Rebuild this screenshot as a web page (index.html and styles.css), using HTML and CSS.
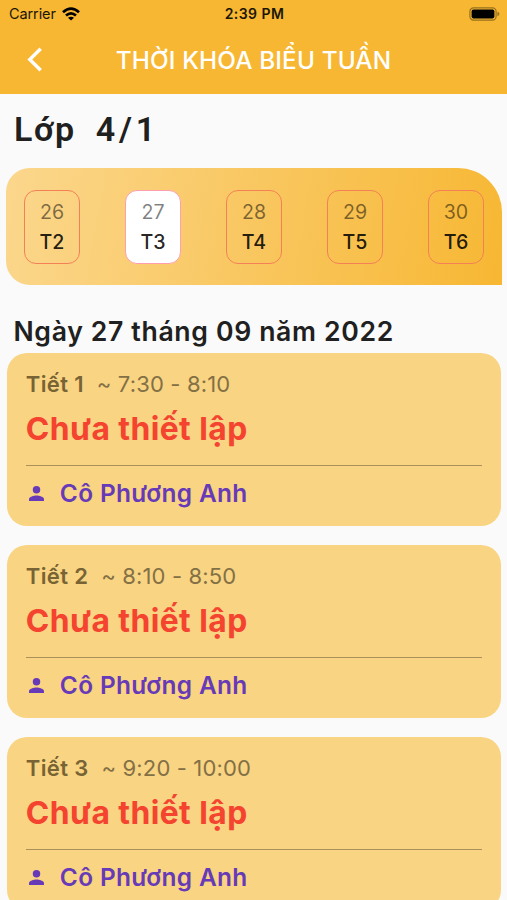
FILE: index.html
```html
<!DOCTYPE html>
<html lang="vi">
<head>
<meta charset="utf-8">
<title>Thời khóa biểu tuần</title>
<link rel="stylesheet" href="styles.css">
</head>
<body>
<header class="header">
  <div class="status">
    <div class="carrier"><span>Carrier</span>
      <svg class="wifi" viewBox="0 0 18 14"><g fill="none" stroke="#000" stroke-width="2.7"><path d="M1 5.2Q9-2 17 5.2"/><path d="M4 8.6Q9 4.2 14 8.6"/></g><path d="M9 13.5L6 10.7Q9 8.6 12 10.7Z"/></svg>
    </div>
    <div class="clock">2:39 PM</div>
    <svg class="battery" viewBox="0 0 31 14"><rect x=".9" y=".9" width="26.2" height="12.2" rx="3.6" fill="none" stroke="#96701f" stroke-width="1.2"/><rect x="2.6" y="2.6" width="22.8" height="8.8" rx="1.8"/><path d="M28.4 4.8Q30.4 5.4 30.4 7T28.4 9.2Z" fill="#96701f"/></svg>
  </div>
  <nav class="nav">
    <svg class="back" viewBox="0 0 16 25"><path d="M13.7 1.8L2.8 12.5L13.7 23.2" fill="none" stroke="#fff" stroke-width="3.4"/></svg>
    <h1 class="title">THỜI KHÓA BIỂU TUẦN</h1>
  </nav>
</header>
<main>
  <h2 class="class-name"><span>Lớp</span><span class="class-number">4/1</span></h2>
  <section class="week">
    <div class="day"><span class="date">26</span><span class="weekday">T2</span></div>
    <div class="day selected"><span class="date">27</span><span class="weekday">T3</span></div>
    <div class="day"><span class="date">28</span><span class="weekday">T4</span></div>
    <div class="day"><span class="date">29</span><span class="weekday">T5</span></div>
    <div class="day"><span class="date">30</span><span class="weekday">T6</span></div>
  </section>
  <h3 class="full-date">Ngày 27 tháng 09 năm 2022</h3>
  <section class="lessons">
    <article class="lesson">
      <div class="period"><b>Tiết 1</b><span>~ 7:30 - 8:10</span></div>
      <div class="subject">Chưa thiết lập</div>
      <div class="teacher"><svg class="person" viewBox="0 0 16 16"><circle cx="8" cy="4" r="4"/><path d="M0 16V14C0 11.3 5.3 10 8 10S16 11.3 16 14V16Z"/></svg><span>Cô Phương Anh</span></div>
    </article>
    <article class="lesson">
      <div class="period"><b>Tiết 2</b><span>~ 8:10 - 8:50</span></div>
      <div class="subject">Chưa thiết lập</div>
      <div class="teacher"><svg class="person" viewBox="0 0 16 16"><circle cx="8" cy="4" r="4"/><path d="M0 16V14C0 11.3 5.3 10 8 10S16 11.3 16 14V16Z"/></svg><span>Cô Phương Anh</span></div>
    </article>
    <article class="lesson">
      <div class="period"><b>Tiết 3</b><span>~ 9:20 - 10:00</span></div>
      <div class="subject">Chưa thiết lập</div>
      <div class="teacher"><svg class="person" viewBox="0 0 16 16"><circle cx="8" cy="4" r="4"/><path d="M0 16V14C0 11.3 5.3 10 8 10S16 11.3 16 14V16Z"/></svg><span>Cô Phương Anh</span></div>
    </article>
  </section>
</main>
</body>
</html>
```
FILE: styles.css
```css
* { box-sizing: border-box; margin: 0; }
html, body { height: 900px; overflow: hidden; }
body { background: #fafafa; color: #202020; font-family: Inter, "Liberation Sans", sans-serif; white-space: nowrap; }
svg { display: block; flex: none; }
.header { height: 94px; background: #f7b733; }
.status { height: 27px; padding: 0 7px 0 9px; display: grid; grid-template-columns: 1fr auto 1fr; align-items: center; color: #1c1606; font-size: 14.5px; }
.carrier { display: flex; align-items: center; gap: 6px; letter-spacing: -.1px; }
.wifi { width: 18px; height: 14px; }
.clock { font-weight: 600; font-size: 14px; letter-spacing: .45px; }
.battery { width: 31px; height: 14px; justify-self: end; }
.nav { height: 65px; display: grid; grid-template-columns: 1fr auto 1fr; align-items: center; }
.back { width: 16px; height: 25px; margin-left: 27px; }
.title { color: #fff; font-weight: 500; font-size: 24.3px; line-height: 30px; letter-spacing: .15px; }
.class-name { height: 74px; padding: 0 0 4px 14px; display: flex; align-items: center; gap: 20px; font-family: Roboto, sans-serif; font-weight: 600; font-size: 34px; line-height: 40px; letter-spacing: 1.5px; }
.class-number { letter-spacing: 3.9px; }
.week { height: 117px; margin: 0 5px 0 6px; padding: 0 18px; display: flex; justify-content: space-between; align-items: center; background: linear-gradient(100deg, #fbd78d, #f7b733); border-radius: 24px 44px 0 24px; }
.day { width: 56px; height: 74px; padding-top: 7px; border: 1.3px solid #f48057; border-radius: 12px; text-align: center; font-size: 19.6px; line-height: 29px; }
.day span { display: block; }
.date { color: rgba(0,0,0,.5); }
.weekday { font-weight: 500; color: rgba(0,0,0,.87); }
.day .weekday { padding-top: 1px; }
.selected { background: #fff; border-color: #ff9eac; }
.full-date { height: 67.5px; padding: 30px 0 0 13.5px; font-weight: 600; font-size: 26.6px; line-height: 32px; letter-spacing: .66px; }
.lessons { padding: 0 6.5px 0 7.3px; display: grid; gap: 18.5px; }
.lesson { height: 173.5px; padding: 16px 18.5px 0; border-radius: 20px; background: #f9d483; }
.period { height: 31px; display: flex; gap: 13px; font-size: 22px; line-height: 30px; letter-spacing: .15px; color: #837045; }
.period b { font-weight: 600; letter-spacing: .35px; color: #776334; }
.subject { height: 66px; padding-top: 9px; border-bottom: 1px solid #ab9059; color: #f4432f; font-weight: 650; font-size: 31.8px; line-height: 40px; letter-spacing: .44px; }
.teacher { height: 55px; display: flex; align-items: center; color: #673ab7; font-weight: 600; font-size: 24.4px; letter-spacing: .38px; }
.person { width: 15px; height: 15px; margin: 0 16px 0 3px; fill: #673ab7; }
```
